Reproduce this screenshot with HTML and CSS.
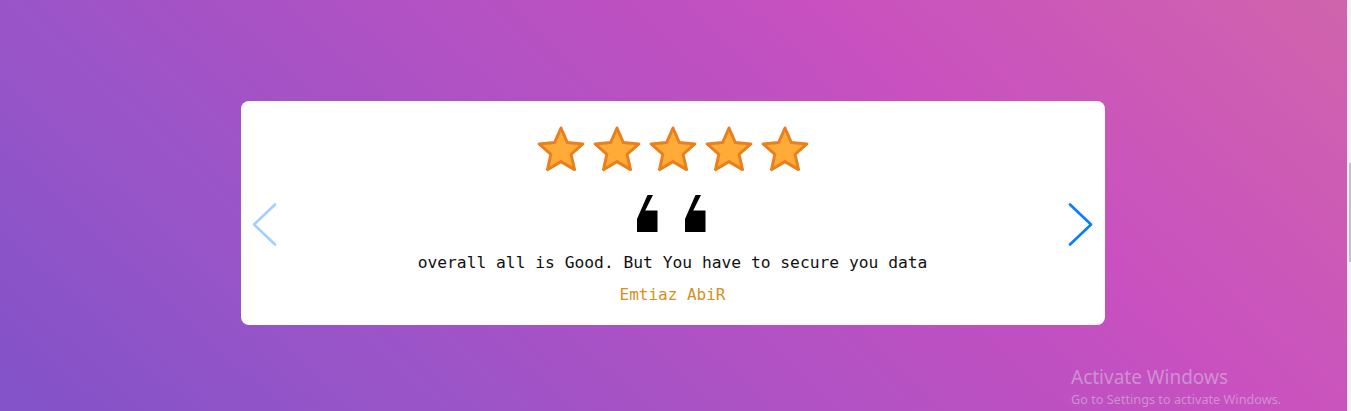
FILE: index.html
```html
<!DOCTYPE html>
<html lang="en">
<head>
<meta charset="utf-8">
<title>Testimonial</title>
<link rel="stylesheet" href="styles.css">
</head>
<body>
<main class="page">
  <section class="card">
    <button class="nav nav-prev" aria-label="Previous">
      <svg width="26" height="44" viewBox="0 0 26 44"><polyline points="23,1.5 2,21.5 23,41.5" fill="none" stroke="currentColor" stroke-width="2.6" stroke-linecap="round" stroke-linejoin="round"/></svg>
    </button>
    <div class="content">
      <div class="stars">
        <svg class="star" width="50" height="46" viewBox="0 0 50 46"><polygon points="25,2 31.23,16.42 46.88,17.89 35.08,28.28 38.52,43.61 25,35.6 11.48,43.61 14.92,28.28 3.12,17.89 18.77,16.42"/></svg>
        <svg class="star" width="50" height="46" viewBox="0 0 50 46"><polygon points="25,2 31.23,16.42 46.88,17.89 35.08,28.28 38.52,43.61 25,35.6 11.48,43.61 14.92,28.28 3.12,17.89 18.77,16.42"/></svg>
        <svg class="star" width="50" height="46" viewBox="0 0 50 46"><polygon points="25,2 31.23,16.42 46.88,17.89 35.08,28.28 38.52,43.61 25,35.6 11.48,43.61 14.92,28.28 3.12,17.89 18.77,16.42"/></svg>
        <svg class="star" width="50" height="46" viewBox="0 0 50 46"><polygon points="25,2 31.23,16.42 46.88,17.89 35.08,28.28 38.52,43.61 25,35.6 11.48,43.61 14.92,28.28 3.12,17.89 18.77,16.42"/></svg>
        <svg class="star" width="50" height="46" viewBox="0 0 50 46"><polygon points="25,2 31.23,16.42 46.88,17.89 35.08,28.28 38.52,43.61 25,35.6 11.48,43.61 14.92,28.28 3.12,17.89 18.77,16.42"/></svg>
      </div>
      <svg class="quote" width="70" height="37" viewBox="0 0 70 37" aria-hidden="true">
        <path d="M10.5,0 H16 L8.2,15.5 H20.5 V37 H0 V24 Z"/>
        <path d="M58.5,0 H64 L56.2,15.5 H68.5 V37 H48 V24 Z"/>
      </svg>
      <p class="text">overall all is Good. But You have to secure you data</p>
      <p class="name">Emtiaz AbiR</p>
    </div>
    <button class="nav nav-next" aria-label="Next">
      <svg width="26" height="44" viewBox="0 0 26 44"><polyline points="3,1.5 24,21.5 3,41.5" fill="none" stroke="currentColor" stroke-width="2.6" stroke-linecap="round" stroke-linejoin="round"/></svg>
    </button>
  </section>
  <div class="watermark">
    <div class="wm-title">Activate Windows</div>
    <div class="wm-sub">Go to Settings to activate Windows.</div>
  </div>
</main>
<div class="scrollbar"><div class="thumb"></div></div>
</body>
</html>
```

FILE: styles.css
```css
* { box-sizing: border-box; }
html, body { margin: 0; height: 411px; overflow: hidden; }
body {
  display: flex;
  font-family: "DejaVu Sans Mono", "Liberation Mono", monospace;
}
.page {
  position: relative;
  flex: 1;
  height: 411px;
  padding-top: 101px;
  background: linear-gradient(43deg, #8252c8 0%, #9a55c8 25%, #a652c5 36%, #c850c0 70%, #d064ac 100%);
}
.card {
  width: 864px;
  height: 224px;
  margin-left: 241px;
  background: #fff;
  border-radius: 8px;
  display: flex;
  align-items: flex-start;
  padding: 0 12px 0 11px;
}
.nav {
  border: 0;
  background: none;
  padding: 0;
  margin-top: 102px;
  width: 26px;
  height: 44px;
  display: flex;
  cursor: pointer;
}
.nav-prev { color: #a3d0ff; }
.nav-next { color: #0a7cff; }
.content {
  flex: 1;
  display: flex;
  flex-direction: column;
  align-items: center;
  padding-top: 25px;
}
.stars { display: flex; gap: 6px; }
.star { fill: #ffab38; stroke: #e8801e; stroke-width: 3; stroke-linejoin: round; }
.quote { margin-top: 23px; margin-left: -1px; fill: #000; }
.text {
  margin: 21px 0 0;
  font-size: 16.3px;
  line-height: 20px;
  color: #111;
}
.name {
  margin: 12px 0 0;
  font-size: 16px;
  line-height: 20px;
  color: #d4901c;
}
.watermark {
  position: absolute;
  left: 1071px;
  top: 364px;
  font-family: "Noto Sans", "Open Sans", sans-serif;
  color: rgba(215, 200, 225, 0.55);
}
.wm-title { font-size: 19px; line-height: 26px; }
.wm-sub { font-size: 12.7px; line-height: 18px; }
.scrollbar {
  width: 4px;
  height: 411px;
  background: #f1f1f1;
  display: flex;
  justify-content: flex-end;
}
.thumb {
  width: 2px;
  height: 99px;
  margin-top: 163px;
  background: #c1c1c1;
}
```
